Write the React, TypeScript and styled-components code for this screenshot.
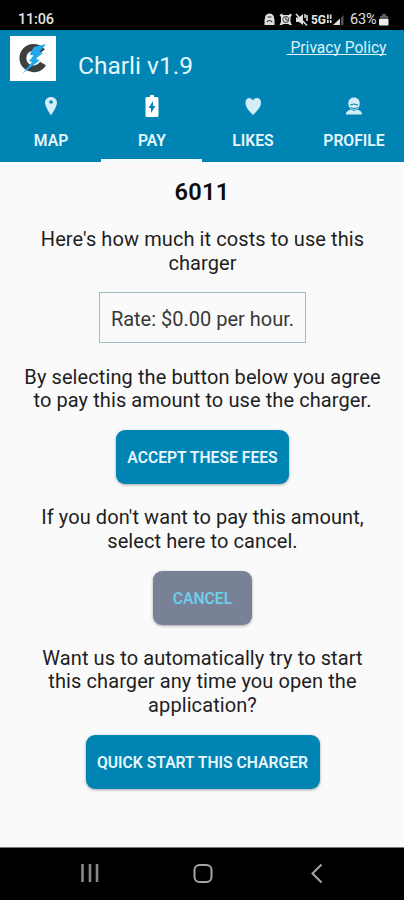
import React from "react";
import styled, { createGlobalStyle } from "styled-components";

const BLUE = "#0084b4";

const GlobalStyle = createGlobalStyle`
  *, *::before, *::after { box-sizing: border-box; }
  body { margin: 0; background: #fafafa; font-family: Roboto, sans-serif; }
`;

const Screen = styled.div`
  display: flex;
  flex-direction: column;
  width: 404px;
  height: 900px;
  overflow: hidden;
  background: #fafafa;
`;

const StatusBar = styled.div`
  display: flex;
  align-items: center;
  height: 30px;
  padding: 10px 15px 0 18px;
  background: #000;
  color: #e2e2e2;
  font-size: 14.5px;
  line-height: 18px;
`;

const Clock = styled.span`
  flex: 1;
  font-weight: 500;
  letter-spacing: -0.2px;
`;

const StatusIcons = styled.svg`
  display: block;
  width: 84px;
  height: 16px;
`;

const Battery = styled.span`
  display: flex;
  align-items: center;
  justify-content: space-between;
  width: 39px;
  margin-left: 2px;
  letter-spacing: -0.2px;
`;

const Header = styled.header`
  height: 132px;
  background: ${BLUE};
  color: #fff;
`;

const TitleRow = styled.div`
  display: flex;
  height: 58px;
  padding: 6px 17.5px 0 10px;
`;

const Logo = styled.svg`
  display: block;
  width: 46px;
  height: 45px;
`;

const Title = styled.h1`
  flex: 1;
  margin: 15px 0 0 22px;
  font-size: 24.5px;
  font-weight: 400;
  line-height: 30px;
  color: #e4f6fd;
  white-space: nowrap;
`;

const PolicyLink = styled.a`
  align-self: flex-start;
  margin-top: 2px;
  font-size: 15.6px;
  line-height: 20px;
  color: #d8f1fb;
  text-decoration: underline;
  text-underline-offset: 1px;
  text-decoration-skip-ink: none;
  white-space: pre;
`;

const Tabs = styled.nav`
  display: grid;
  grid-template-columns: repeat(4, 1fr);
  height: 74px;
`;

const Tab = styled.div<{ $active?: boolean }>`
  display: flex;
  flex-direction: column;
  align-items: center;
  padding: 6px 0 0 1px;
  border-bottom: 3px solid ${(p) => (p.$active ? "#f4fbfe" : "transparent")};
  color: ${(p) => (p.$active ? "#fff" : "#d3edf7")};
`;

const TabIcon = styled.svg`
  display: block;
  width: 24px;
  height: 24px;
`;

const TabLabel = styled.span`
  margin-top: 13px;
  font-size: 15.7px;
  font-weight: 600;
  line-height: 20px;
  color: #e6f7fd;
`;

const Main = styled.main`
  flex: 1;
  display: flex;
  flex-direction: column;
  align-items: center;
  padding-top: 15px;
  color: #1e1e1e;
`;

const ChargerId = styled.h2`
  margin: 0 0 21px;
  font-size: 23.6px;
  font-weight: 600;
  line-height: 30px;
  letter-spacing: 0.25px;
  color: #0c0c0c;
`;

const Message = styled.p`
  margin: 0 0 0 1px;
  font-size: 20px;
  line-height: 23.5px;
  letter-spacing: 0.09px;
  text-align: center;
  white-space: nowrap;
`;

const Rate = styled.div`
  width: 207px;
  height: 51px;
  margin: 17px 0 22.5px 1px;
  border: 1px solid #9dbfc6;
  font-size: 20px;
  line-height: 52px;
  text-align: center;
  white-space: nowrap;
  color: #383838;
`;

const Button = styled.button<{ $width: number; $muted?: boolean }>`
  width: ${(p) => p.$width}px;
  height: 54px;
  flex: none;
  margin: 17.5px 0 22px 1px;
  padding: 2px 0 0;
  border: 0;
  border-radius: 9px;
  background: ${(p) => (p.$muted ? "#788196" : BLUE)};
  box-shadow: 0 1px 3px rgba(0, 0, 0, 0.35);
  color: ${(p) => (p.$muted ? "#6fcdec" : "#e6f7fd")};
  font: 600 15.7px/52px Roboto, sans-serif;
  white-space: nowrap;
`;

const NavBar = styled.footer`
  display: flex;
  justify-content: space-between;
  align-items: center;
  height: 53px;
  padding: 0 76px 3px 78px;
  border-top: 1px solid #777;
  background: #000;
`;

const NavIcon = styled.svg`
  display: block;
  width: 24px;
  height: 24px;
  fill: none;
  stroke: #a6a6a6;
  stroke-width: 2;
`;

export default function App() {
  return (
    <Screen>
      <GlobalStyle />
      <StatusBar>
        <Clock>11:06</Clock>
        <StatusIcons viewBox="0 0 84 16" fill="#dedede">
          <path d="M1 5Q2 1.5 5.5 1.5T10 5V7H10.5V13H.5V7H1Z" />
          <path d="M3.5 5H7.5M3 10Q5.5 7 8 10" fill="none" stroke="#333" strokeWidth="1.2" />
          <path d="M15.5 3L18 1.5L19 3H25L26 1.5L28 3L26.5 5V10L28 13H25.5L24.5 12H19L18 13H15.5L17 10V5Z" />
          <circle cx="21.8" cy="7.5" r="3" stroke="#333" fill="none" />
          <path d="M21.8 5.5V8H24" stroke="#333" fill="none" />
          <path d="M32 5.5H35L39 2V13L35 10H32Z" />
          <path d="M32 2L43 13.5M41 2V6M43 3V9" stroke="#dedede" strokeWidth="1.6" />
          <text x="47" y="12" fontFamily="Roboto" fontSize="12" fontWeight="800" textLength="15">5G</text>
          <path d="M63 2.5H64.7V7H63ZM65.8 2.5H67.5V7H65.8ZM63 8H64.7V11H63ZM65.8 8H67.5V11H65.8Z" />
          <path d="M69 13L76 6.5V13Z" />
          <path d="M77 5.5L79.5 3V13H77Z" fill="#555" />
        </StatusIcons>
        <Battery>
          63%
          <svg width="10" height="14" viewBox="0 0 10 14">
            <path d="M3 1H7V3H9V6H1V3H3Z" fill="#5b5b5b" />
            <path d="M0 6H9.5V11.5Q9.5 12.5 8.5 12.5H1Q0 12.5 0 11.5Z" fill="#ececec" />
          </svg>
        </Battery>
      </StatusBar>

      <Header>
        <TitleRow>
          <Logo viewBox="0 0 46 45">
            <path d="M0 0H46V45H0Z" fill="#fff" />
            <path d="M32.2 15.5A10.8 10.8 0 1 0 33 27.5" fill="none" stroke="#3d4042" strokeWidth="6.8" />
            <path d="M36 8L24 11L19.5 18.5L23.5 19.5L19 25L22 26L12.5 37.5L29.5 24.5L26 22.5L33 17L29.5 16Z" fill="#23a8ee" />
          </Logo>
          <Title>Charli v1.9</Title>
          <PolicyLink> Privacy Policy</PolicyLink>
        </TitleRow>
        <Tabs>
          <Tab>
            <TabIcon viewBox="0 0 24 24" fill="currentColor">
              <path fillRule="evenodd" d="M12 3C8.5 3 6 5.5 6 8.8C6 13 12 21.5 12 21.5S18 13 18 8.8C18 5.5 15.5 3 12 3ZM12 6.2A1.8 1.8 0 1 1 12 9.8A1.8 1.8 0 1 1 12 6.2Z" />
            </TabIcon>
            <TabLabel>MAP</TabLabel>
          </Tab>
          <Tab $active>
            <TabIcon viewBox="0 0 24 24" fill="currentColor">
              <path d="M10 1H14V3H17Q18.5 3 18.5 4.5V21.5Q18.5 23 17 23H7Q5.5 23 5.5 21.5V4.5Q5.5 3 7 3H10Z" />
              <path d="M13 7L8.5 14H11V19L15.5 12H13Z" fill={BLUE} />
            </TabIcon>
            <TabLabel>PAY</TabLabel>
          </Tab>
          <Tab>
            <TabIcon viewBox="0 0 24 24" fill="currentColor">
              <path d="M12 21C8 17 4.5 13.5 4.5 8.5C4.5 3 10 2.5 12 6.5C14 2.5 20 3 20 8.5C20 13.5 16 17 12 21Z" />
            </TabIcon>
            <TabLabel>LIKES</TabLabel>
          </Tab>
          <Tab>
            <TabIcon viewBox="0 0 24 24" fill="currentColor">
              <path d="M4 20.5C4 17 7 16 9 15.5L12 17L15 15.5C17 16 20 17 20 20.5Z" />
              <path d="M12 3.5C8.5 3.5 6.3 6 6.3 9.5C6.3 12 7.5 14.5 9 15L12 16L15 15C16.5 14.5 17.7 12 17.7 9.5C17.7 6 15.5 3.5 12 3.5Z" />
              <path d="M8 11Q12 9 16 11M8.5 13.5Q12 16 15.5 13.5" fill="none" stroke={BLUE} />
            </TabIcon>
            <TabLabel>PROFILE</TabLabel>
          </Tab>
        </Tabs>
      </Header>

      <Main>
        <ChargerId>6011</ChargerId>
        <Message>
          Here's how much it costs to use this
          <br />
          charger
        </Message>
        <Rate>Rate: $0.00 per hour.</Rate>
        <Message>
          By selecting the button below you agree
          <br />
          to pay this amount to use the charger.
        </Message>
        <Button $width={173}>ACCEPT THESE FEES</Button>
        <Message>
          If you don't want to pay this amount,
          <br />
          select here to cancel.
        </Message>
        <Button $width={99} $muted>CANCEL</Button>
        <Message>
          Want us to automatically try to start
          <br />
          this charger any time you open the
          <br />
          application?
        </Message>
        <Button $width={234}>QUICK START THIS CHARGER</Button>
      </Main>

      <NavBar>
        <NavIcon viewBox="0 0 24 24">
          <path d="M4.5 3V21M12 3V21M19 3V21" strokeWidth="2.6" stroke="#888" />
        </NavIcon>
        <NavIcon viewBox="0 0 24 24">
          <rect x="3.5" y="4" width="17" height="17" rx="5" />
        </NavIcon>
        <NavIcon viewBox="0 0 24 24">
          <path d="M17.5 3.5L8.5 12.5L17.5 21.5" />
        </NavIcon>
      </NavBar>
    </Screen>
  );
}
